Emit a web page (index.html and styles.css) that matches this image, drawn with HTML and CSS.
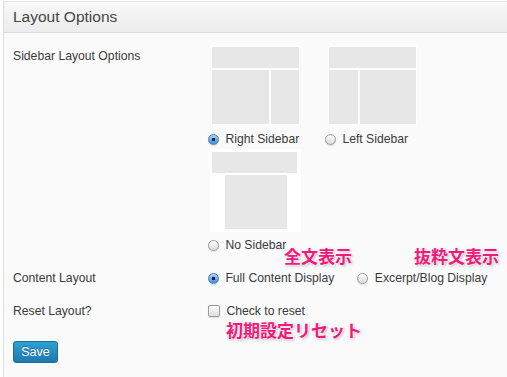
FILE: index.html
```html
<!DOCTYPE html>
<html lang="ja">
<head>
  <meta charset="UTF-8" />
  <meta name="viewport" content="width=device-width, initial-scale=1" />
  <title>Layout Options</title>
  <link rel="stylesheet" href="styles.css">
</head>
<body>
  <div class="panel">
    <h3 class="panel-title">Layout Options</h3>

    <form class="panel-body">
      <div class="field-label">Sidebar Layout Options</div>
      <div class="field">
        <div class="layout-choices">
          <label class="choice">
            <span class="thumb thumb-right">
              <span class="blk blk-top"></span>
              <span class="blk"></span>
              <span class="blk"></span>
            </span>
            <span class="opt"><input type="radio" name="sidebar" checked> Right Sidebar</span>
          </label>
          <label class="choice">
            <span class="thumb thumb-left">
              <span class="blk blk-top"></span>
              <span class="blk"></span>
              <span class="blk"></span>
            </span>
            <span class="opt"><input type="radio" name="sidebar"> Left Sidebar</span>
          </label>
          <label class="choice">
            <span class="thumb thumb-none">
              <span class="blk blk-top"></span>
              <span class="blk blk-main"></span>
            </span>
            <span class="opt"><input type="radio" name="sidebar"> No Sidebar</span>
          </label>
        </div>
      </div>

      <div class="field-label">Content Layout</div>
      <div class="field field-inline">
        <label class="opt"><input type="radio" name="content" checked> Full Content Display</label>
        <label class="opt"><input type="radio" name="content"> Excerpt/Blog Display</label>
      </div>

      <div class="field-label">Reset Layout?</div>
      <div class="field">
        <label class="opt"><input type="checkbox"> Check to reset</label>
      </div>

      <div class="actions">
        <button type="button" class="save-button">Save</button>
      </div>
    </form>

    <!-- 注釈 -->
    <span class="note note-full">全文表示</span>
    <span class="note note-excerpt">抜粋文表示</span>
    <span class="note note-reset">初期設定リセット</span>
  </div>
</body>
</html>
```

FILE: styles.css
```css
html, body {
  margin: 0;
  padding: 0;
}

body {
  background: #fff;
  padding-top: 1px;
  font-family: "Liberation Sans", Arial, sans-serif;
  font-size: 12.2px;
  color: #3a3a3a;
  height: 376px;
  overflow: hidden;
}

.panel {
  position: relative;
  margin-left: 3px;
  border-left: 1px solid #dedede;
  border-top: 1px solid #e2e2e2;
  background: #fafafa;
  height: 100%;
}

.panel-title {
  margin: 0;
  height: 30px;
  line-height: 30px;
  padding-left: 9px;
  font-size: 15.5px;
  font-weight: normal;
  color: #464646;
  background: linear-gradient(#f8f8f8, #ececec);
  border-bottom: 1px solid #dadada;
}

.panel-body {
  display: grid;
  grid-template-columns: 195px 1fr;
  row-gap: 17px;
  padding: 12px 0 0 9px;
  line-height: 16px;
}

.panel-body > .field-label:first-child {
  padding-top: 3px;
}

.layout-choices {
  display: flex;
  flex-wrap: wrap;
  width: 240px;
  row-gap: 2px;
}

.choice {
  display: flex;
  flex-direction: column;
  width: 117px;
}

.thumb {
  display: grid;
  box-sizing: border-box;
  width: 89px;
  height: 81px;
  margin: 0 0 5px 3px;
  padding: 2px 1px 2px 1px;
  gap: 2px;
  background: #fff;
}

.blk {
  background: #e6e7e6;
}

.blk-top {
  grid-column: 1 / -1;
}

.thumb-right {
  grid-template-columns: 57px 1fr;
  grid-template-rows: 21px 1fr;
}

.thumb-left {
  grid-template-columns: 29px 1fr;
  grid-template-rows: 21px 1fr;
}

.thumb-none {
  width: 91px;
  height: 83px;
  margin-left: 2px;
  padding: 3px 4px 3px 2px;
  grid-template-rows: 21px 1fr;
}

.thumb-none .blk-main {
  margin: 0 10px 0 13px;
}

.field-inline {
  display: flex;
  gap: 23px;
}

.opt {
  display: flex;
  align-items: center;
  white-space: pre;
}

.opt input {
  -webkit-appearance: none;
  appearance: none;
  box-sizing: border-box;
  width: 11px;
  height: 11px;
  margin: 0 3px 0 0;
  border: 1px solid #9b9b9b;
  background: linear-gradient(#fdfdfd, #dcdcdc);
  box-shadow: 0 1px 1px rgba(0, 0, 0, 0.12);
}

.opt input[type="radio"] {
  border-radius: 50%;
}

.opt input[type="radio"]:checked {
  border-color: #4b7fba;
  background: radial-gradient(circle, #1c2530 0, #1c2530 1.6px, transparent 2px),
              linear-gradient(#a9d2f6, #3f90dd);
}

.opt input[type="checkbox"] {
  border-radius: 2px;
  width: 12px;
  height: 12px;
}

.actions {
  grid-column: 1 / -1;
  padding-top: 5px;
}

.save-button {
  width: 45px;
  height: 22px;
  padding: 0;
  font-family: "Liberation Sans", Arial, sans-serif;
  font-size: 12.5px;
  color: #fff;
  background: linear-gradient(#2e9fd2, #1f7aac);
  border: 1px solid #1b6d9a;
  border-radius: 3px;
  text-shadow: 0 -1px 0 rgba(0, 0, 0, 0.25);
}

.note {
  position: absolute;
  font-family: "Noto Sans CJK JP", sans-serif;
  font-weight: 700;
  font-size: 17px;
  line-height: 17px;
  color: #f3187a;
  text-shadow: 0 0 2px #fff, 0 0 2px #fff, 1px 1px 3px rgba(0, 0, 0, 0.35);
  white-space: nowrap;
}

.note-full {
  left: 280px;
  top: 245px;
}

.note-excerpt {
  left: 410px;
  top: 245px;
}

.note-reset {
  left: 222px;
  top: 319px;
}
```
